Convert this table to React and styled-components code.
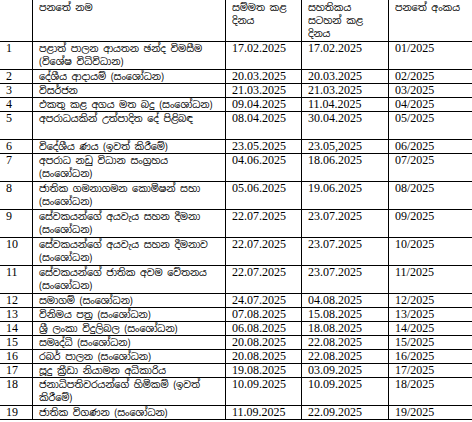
import React from "react";
import styled, { createGlobalStyle } from "styled-components";

const GlobalStyle = createGlobalStyle`
  html, body {
    margin: 0;
    padding: 0;
    background: #ffffff;
  }
`;

const Page = styled.div`
  width: 472px;
  height: 422px;
  overflow: hidden;
  background: #fff;
`;

const Table = styled.table`
  border-collapse: collapse;
  table-layout: fixed;
  width: 473px;
  margin: -1px 0 0 -1px;
  font-family: "Liberation Serif", "Noto Sans Sinhala", "Noto Serif Sinhala", serif;
  font-size: 12px;
  color: #000;
`;

const Col = styled.col`
  width: ${(p) => p.$w}px;
`;

const Row = styled.tr`
  height: ${(p) => p.$h}px;
`;

const Cell = styled.td`
  border: 1px solid #000;
  padding: 0 3px 0 6px;
  vertical-align: top;
  line-height: 13px;
  overflow: hidden;
`;

const HeadCell = styled(Cell).attrs({ as: "th" })`
  font-weight: normal;
  text-align: left;
  padding-top: 1px;
`;

const Sinhala = styled.span`
  font-size: 9.6px;
  letter-spacing: -0.1px;
  line-height: 13px;
  font-family: "Noto Sans Sinhala", "Noto Serif Sinhala", "Liberation Sans", sans-serif;
`;

const rows = [
  ["1", "පළාත් පාලන ආයතන ඡන්ද විමසීම (විශේෂ විධිවිධාන)", "17.02.2025", "17.02.2025", "01/2025", 2],
  ["2", "දේශීය ආදායම් (සංශෝධන)", "20.03.2025", "20.03.2025", "02/2025", 1],
  ["3", "විසර්ජන", "21.03.2025", "21.03.2025", "03/2025", 1],
  ["4", "එකතු කළ අගය මත බදු (සංශෝධන)", "09.04.2025", "11.04.2025", "04/2025", 1],
  ["5", "අපරාධයකින් උත්පාදිත දේ පිළිබඳ", "08.04.2025", "30.04.2025", "05/2025", 2],
  ["6", "විදේශීය ණය (ඉවත් කිරීමේ)", "23.05.2025", "23.05,2025", "06/2025", 1],
  ["7", "අපරාධ නඩු විධාන සංග්‍රහය (සංශෝධන)", "04.06.2025", "18.06.2025", "07/2025", 2],
  ["8", "ජාතික ගමනාගමන කොමිෂන් සභා (සංශෝධන)", "05.06.2025", "19.06.2025", "08/2025", 2],
  ["9", "සේවකයන්ගේ අයවැය සහන දීමනා (සංශෝධන)", "22.07.2025", "23.07.2025", "09/2025", 2],
  ["10", "සේවකයන්ගේ අයවැය සහන දීමනාව (සංශෝධන)", "22.07.2025", "23.07.2025", "10/2025", 2],
  ["11", "සේවකයන්ගේ ජාතික අවම වේතනය (සංශෝධන)", "22.07.2025", "23.07.2025", "11/2025", 2],
  ["12", "සමාගම් (සංශෝධන)", "24.07.2025", "04.08.2025", "12/2025", 1],
  ["13", "විනිමය පත්‍ර (සංශෝධන)", "07.08.2025", "15.08.2025", "13/2025", 1],
  ["14", "ශ්‍රී ලංකා විදුලිබල (සංශෝධන)", "06.08.2025", "18.08.2025", "14/2025", 1],
  ["15", "සමෘද්ධි (සංශෝධන)", "20.08.2025", "22.08.2025", "15/2025", 1],
  ["16", "රබර් පාලන (සංශෝධන)", "20.08.2025", "22.08.2025", "16/2025", 1],
  ["17", "සූදු ක්‍රීඩා නියාමන අධිකාරිය", "19.08.2025", "03.09.2025", "17/2025", 1],
  ["18", "ජනාධිපතිවරයන්ගේ හිමිකම් (ඉවත් කිරීමේ)", "10.09.2025", "10.09.2025", "18/2025", 2],
  ["19", "ජාතික විගණන (සංශෝධන)", "11.09.2025", "22.09.2025", "19/2025", 1],
];

const rowHeight = (lines) => (lines === 2 ? 28 : 14);

export default function App() {
  return (
    <Page>
      <GlobalStyle />
      <Table>
        <colgroup>
          <Col $w={33} />
          <Col $w={193} />
          <Col $w={76} />
          <Col $w={87} />
          <Col $w={84} />
        </colgroup>
        <thead>
          <Row $h={42}>
            <HeadCell></HeadCell>
            <HeadCell>
              <Sinhala>පනතේ නම</Sinhala>
            </HeadCell>
            <HeadCell>
              <Sinhala>සම්මත කළ දිනය</Sinhala>
            </HeadCell>
            <HeadCell>
              <Sinhala>සහතිකය සටහන් කළ දිනය</Sinhala>
            </HeadCell>
            <HeadCell>
              <Sinhala>පනතේ අංකය</Sinhala>
            </HeadCell>
          </Row>
        </thead>
        <tbody>
          {rows.map(([no, name, passed, certified, num, lines]) => (
            <Row key={no} $h={rowHeight(lines)}>
              <Cell>{no}</Cell>
              <Cell>
                <Sinhala>{name}</Sinhala>
              </Cell>
              <Cell>{passed}</Cell>
              <Cell>{certified}</Cell>
              <Cell>{num}</Cell>
            </Row>
          ))}
        </tbody>
      </Table>
    </Page>
  );
}
